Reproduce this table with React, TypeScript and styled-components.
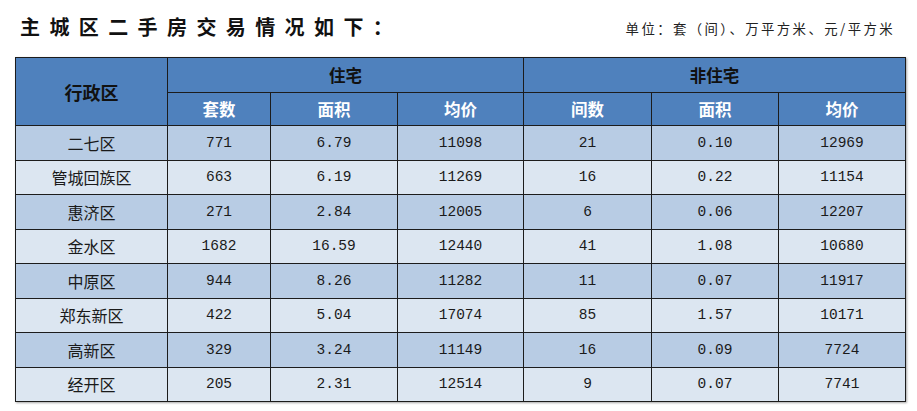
import styled, { createGlobalStyle } from "styled-components";

const GlobalStyle = createGlobalStyle`
  html, body {
    margin: 0;
    padding: 0;
    background: #ffffff;
  }
  body {
    font-family: "Noto Sans CJK SC", "Noto Sans", sans-serif;
  }
`;

const Page = styled.div`
  width: 917px;
  height: 411px;
  padding: 0 12px 0 15px;
  box-sizing: border-box;
`;

const TopBar = styled.div`
  display: flex;
  justify-content: space-between;
  align-items: center;
  height: 57px;
  padding: 0 10px 4px 5px;
  box-sizing: border-box;
`;

const Title = styled.h1`
  margin: 0;
  font-family: "Noto Sans CJK SC", serif;
  font-size: 20px;
  font-weight: 700;
  letter-spacing: 9.4px;
  color: #111;
  line-height: 1;
`;

const Units = styled.div`
  font-family: "Noto Sans CJK SC", sans-serif;
  font-size: 13.4px;
  letter-spacing: 2.4px;
  color: #222;
  padding-top: 2px;
`;

const Table = styled.table`
  border-collapse: collapse;
  table-layout: fixed;
  width: 890px;
  box-shadow: 1px 1px 2px rgba(0, 0, 0, 0.35);
`;

const HeadCell = styled.th<{ $white?: boolean; $h?: number }>`
  background: #4f81bd;
  border: 1.5px solid #1c1c1c;
  height: ${(p) => p.$h ?? 32.5}px;
  padding: 0;
  line-height: 20px;
  text-align: center;
  font-family: "Noto Sans CJK SC", sans-serif;
  font-weight: 700;
  font-size: 16.5px;
  color: ${(p) => (p.$white ? "#ffffff" : "#111111")};
`;

const Row = styled.tr<{ $dark: boolean }>`
  background: ${(p) => (p.$dark ? "#b8cce4" : "#dce6f1")};
`;

const NameCell = styled.td`
  border: 1.5px solid #1c1c1c;
  height: 33.5px;
  padding: 0;
  line-height: 20px;
  text-align: center;
  font-family: "Noto Sans CJK SC", sans-serif;
  font-size: 16px;
  color: #1a1a1a;
`;

const NumCell = styled.td`
  border: 1.5px solid #1c1c1c;
  height: 33.5px;
  padding: 0;
  line-height: 20px;
  text-align: center;
  font-family: "Liberation Mono", monospace;
  font-size: 14.5px;
  color: #1a1a1a;
`;

const widths = [152, 103, 127, 126, 128, 127, 127];

const rows: [string, string, string, string, string, string, string][] = [
  ["二七区", "771", "6.79", "11098", "21", "0.10", "12969"],
  ["管城回族区", "663", "6.19", "11269", "16", "0.22", "11154"],
  ["惠济区", "271", "2.84", "12005", "6", "0.06", "12207"],
  ["金水区", "1682", "16.59", "12440", "41", "1.08", "10680"],
  ["中原区", "944", "8.26", "11282", "11", "0.07", "11917"],
  ["郑东新区", "422", "5.04", "17074", "85", "1.57", "10171"],
  ["高新区", "329", "3.24", "11149", "16", "0.09", "7724"],
  ["经开区", "205", "2.31", "12514", "9", "0.07", "7741"],
];

export default function App() {
  return (
    <>
      <GlobalStyle />
      <Page>
        <TopBar>
          <Title>主城区二手房交易情况如下：</Title>
          <Units>单位：套（间）、万平方米、元/平方米</Units>
        </TopBar>
        <Table>
          <colgroup>
            {widths.map((w, i) => (
              <col key={i} style={{ width: w }} />
            ))}
          </colgroup>
          <thead>
            <tr>
              <HeadCell rowSpan={2} style={{ fontSize: 18 }}>
                行政区
              </HeadCell>
              <HeadCell colSpan={3} $h={33.5}>
                住宅
              </HeadCell>
              <HeadCell colSpan={3} $h={33.5}>
                非住宅
              </HeadCell>
            </tr>
            <tr>
              <HeadCell $white>套数</HeadCell>
              <HeadCell $white>面积</HeadCell>
              <HeadCell $white>均价</HeadCell>
              <HeadCell $white>间数</HeadCell>
              <HeadCell $white>面积</HeadCell>
              <HeadCell $white>均价</HeadCell>
            </tr>
          </thead>
          <tbody>
            {rows.map((r, i) => (
              <Row key={r[0]} $dark={i % 2 === 0}>
                <NameCell>{r[0]}</NameCell>
                {r.slice(1).map((v, j) => (
                  <NumCell key={j}>{v}</NumCell>
                ))}
              </Row>
            ))}
          </tbody>
        </Table>
      </Page>
    </>
  );
}
